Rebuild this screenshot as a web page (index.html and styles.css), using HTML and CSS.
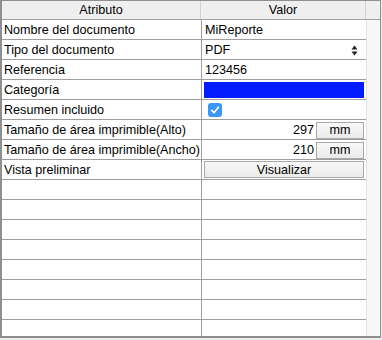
FILE: index.html
```html
<!DOCTYPE html>
<html>
<head>
<meta charset="utf-8">
<link rel="stylesheet" href="styles.css">
</head>
<body>
<div class="frame">
  <div class="head">
    <div class="hcell c1">Atributo</div>
    <div class="hcell c2">Valor</div>
    <div class="hcell c3"></div>
  </div>
  <div class="body">
    <div class="grid">
      <div class="row"><div class="k">Nombre del documento</div><div class="v">MiReporte</div></div>
      <div class="row"><div class="k">Tipo del documento</div><div class="v sel">PDF<svg class="arrows" width="7" height="11" viewBox="0 0 7 11"><path d="M3.5 0.5 L6.5 4.5 L0.5 4.5 Z M3.5 10.5 L6.5 6.5 L0.5 6.5 Z" fill="#222"/></svg></div></div>
      <div class="row"><div class="k">Referencia</div><div class="v">123456</div></div>
      <div class="row"><div class="k">Categoría</div><div class="v box"><div class="swatch"></div></div></div>
      <div class="row"><div class="k">Resumen incluido</div><div class="v box"><span class="check"><svg width="14" height="14" viewBox="0 0 14 14"><path d="M3.8 7.4 L6 9.8 L10.4 4.2" fill="none" stroke="#fff" stroke-width="1.6" stroke-linecap="round" stroke-linejoin="round"/></svg></span></div></div>
      <div class="row"><div class="k">Tamaño de área imprimible(Alto)</div><div class="v num"><span class="n">297</span><span class="btn unit">mm</span></div></div>
      <div class="row"><div class="k">Tamaño de área imprimible(Ancho)</div><div class="v num"><span class="n">210</span><span class="btn unit">mm</span></div></div>
      <div class="row"><div class="k">Vista preliminar</div><div class="v box"><span class="btn wide">Visualizar</span></div></div>
      <div class="row"><div class="k"></div><div class="v"></div></div>
      <div class="row"><div class="k"></div><div class="v"></div></div>
      <div class="row"><div class="k"></div><div class="v"></div></div>
      <div class="row"><div class="k"></div><div class="v"></div></div>
      <div class="row"><div class="k"></div><div class="v"></div></div>
      <div class="row"><div class="k"></div><div class="v"></div></div>
      <div class="row"><div class="k"></div><div class="v"></div></div>
      <div class="row last"><div class="k"></div><div class="v"></div></div>
    </div>
    <div class="scroll"></div>
  </div>
</div>
</body>
</html>
```
FILE: styles.css
```css
html, body {
  margin: 0;
  padding: 0;
  background: #ececec;
}
body {
  font-family: "Liberation Sans", Arial, sans-serif;
  font-size: 12.6px;
  color: #000;
}
.frame {
  width: 378px;
  height: 335px;
  border: 1px solid #8f8f8f;
  border-left-width: 2px;
  border-bottom-width: 2px;
  background: #fff;
  display: flex;
  flex-direction: column;
  overflow: hidden;
}
.head {
  display: flex;
  height: 18px;
  background: #efefef;
  border-bottom: 1px solid #a0a0a0;
}
.hcell {
  display: flex;
  align-items: center;
  justify-content: center;
  line-height: 18px;
}
.c1 { width: 198px; border-right: 1px solid #d2d2d2; }
.c2 { width: 164px; border-right: 1px solid #d2d2d2; }
.c3 { flex: 1; }
.body {
  flex: 1;
  display: flex;
}
.grid {
  width: 364px;
  display: flex;
  flex-direction: column;
}
.row {
  display: flex;
  height: 19px;
  border-bottom: 1px solid #9e9e9e;
}
.row.last { border-bottom: none; }
.k {
  box-sizing: border-box;
  width: 200px;
  border-right: 1px solid #9e9e9e;
  padding-left: 2px;
  padding-top: 1px;
  line-height: 19px;
  white-space: nowrap;
  overflow: hidden;
}
.v {
  flex: 1;
  display: flex;
  align-items: center;
  padding-left: 3px;
  padding-right: 2px;
  padding-top: 1px;
  white-space: nowrap;
}
.v.box { padding-top: 0; }
.sel {
  justify-content: space-between;
  padding-right: 8px;
}
.swatch {
  width: 160px;
  height: 16px;
  background: #001cff;
  margin-left: -1px;
}
.check {
  width: 14px;
  height: 14px;
  border-radius: 3px;
  background: #3c96f8;
  margin-left: 3px;
  display: inline-flex;
}
.num {
  justify-content: flex-end;
}
.n { margin-right: 2px; }
.btn {
  box-sizing: border-box;
  height: 17px;
  border: 1px solid #a9a9a9;
  background: linear-gradient(#f8f8f8, #ebebeb);
  display: inline-flex;
  align-items: center;
  justify-content: center;
}
.unit { width: 48px; }
.wide { width: 160px; margin-left: -1px; }
.scroll {
  flex: 1;
  background: #f7f7f7;
  border-left: 1px solid #e3e3e3;
}
```
